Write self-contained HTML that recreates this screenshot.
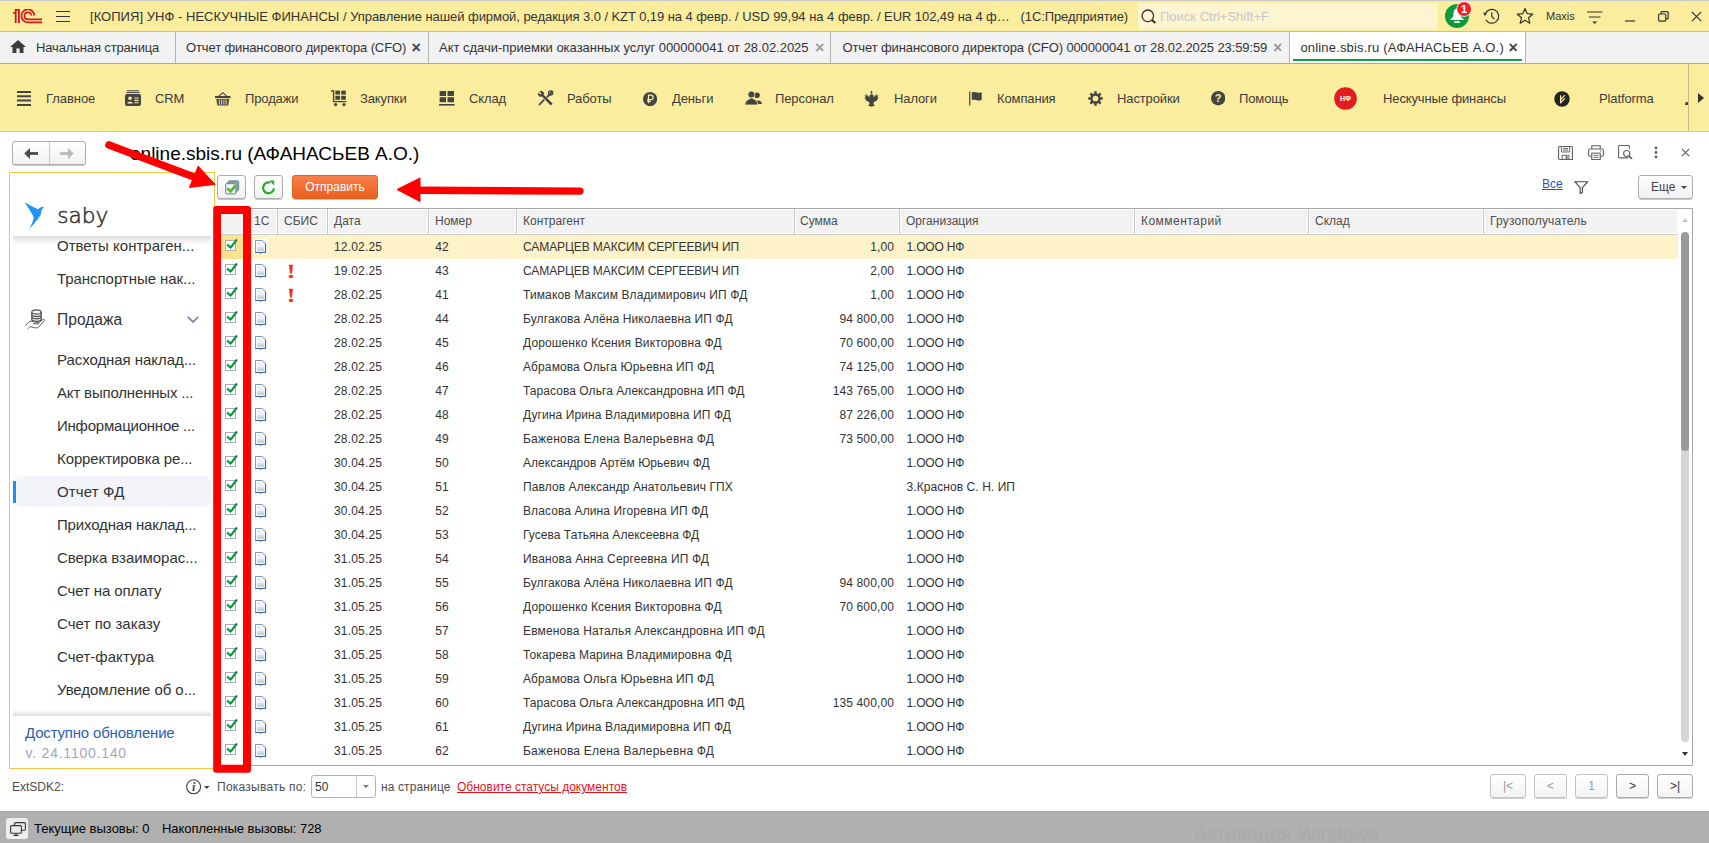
<!DOCTYPE html>
<html lang="ru">
<head>
<meta charset="utf-8">
<title>online.sbis.ru</title>
<style>
*{box-sizing:border-box;margin:0;padding:0}
html,body{width:1709px;height:843px;overflow:hidden;background:#fff}
body{font-family:"Liberation Sans",Arial,sans-serif;font-size:13px;color:#333;position:relative}
.abs{position:absolute}
svg{display:block}
/* title bar */
#tb{position:absolute;left:0;top:0;width:1709px;height:32px;background:#fbed9e;border-top:1px solid #c9c9c9;border-bottom:1px solid #cfc170}
#tb .t{position:absolute;top:8px;left:90px;font-size:13px;line-height:16px;color:#333;white-space:pre}
#srch{position:absolute;left:1138px;top:2px;width:300px;height:26px;background:#fdf5cf;border-radius:4px}
#srch span{position:absolute;left:22px;top:6px;font-size:13px;line-height:16px;color:#c9c5c8}
/* tabs */
#tabs{position:absolute;left:0;top:32px;width:1709px;height:32px;background:#f2f2f2;border-bottom:1px solid #a9a9a9}
.tab{position:absolute;top:0;height:31px;border-right:1px solid #b4b4b4;font-size:13px;line-height:16px;color:#333;white-space:pre}
.tab .l{position:absolute;top:8px}
.tab .x{position:absolute;top:7.8px;font-size:16px;line-height:16px;color:#9a9a9a;font-weight:bold}
/* menu */
#menu{position:absolute;left:0;top:64px;width:1709px;height:68px;background:#fbed9e;border-bottom:1px solid #d8cc8d}
.mi{position:absolute;top:27px;font-size:13px;line-height:16px;color:#3c3c3c;white-space:pre;letter-spacing:-0.12px}
.ic{position:absolute}
/* page header */
#ttl{position:absolute;left:130px;top:143px;font-size:19px;line-height:22px;color:#000;white-space:pre}
/* sidebar */
#sb{position:absolute;left:9px;top:172px;width:206px;height:597px;border:1px solid #f3c840;background:#fff}
.si{position:absolute;left:57px;font-size:15px;line-height:20px;color:#333;white-space:pre;letter-spacing:-0.12px}
/* toolbar */
.btn{position:absolute;height:24px;border:1px solid #adadad;border-radius:3px;background:linear-gradient(#fff,#f1f1f1);box-shadow:0 1px 0 #c8c8c8}
/* table */
#tbl{position:absolute;left:217px;top:208px;width:1476px;height:558px;border:1px solid #a6a6a6;border-bottom-color:#a6a6a6;background:#fff}
#th{position:absolute;left:218px;top:209px;width:1460px;height:26px;background:#f2f2f2;border-bottom:1px solid #cdcdcd;box-shadow:inset 0 1px 0 #fff,inset 0 -1px 0 #fff,inset -1px 0 0 #fff}
.h{position:absolute;top:214px;font-size:12px;line-height:14px;color:#4d4d4d;white-space:pre}
.hd{position:absolute;top:209px;width:3px;height:25px;margin-left:-1px;background:#c4c4c4;border-left:1px solid #fff;border-right:1px solid #fff}
.row{position:absolute;left:218px;width:1460px;height:24px;font-size:12px;line-height:14px;color:#333;white-space:pre}
.row.sel{background:#fef2c8}
.row span{position:absolute;top:5px}
.row .cb{left:7px;top:2.5px}
.row.sel .cb{}
.row .dc{left:36px;top:5px}
.row.sel .dc{background:#fff;left:35px;top:4px;width:15px;height:15px;padding:1px 0 0 1px}
.row .ex{left:69.3px;top:3.7px;font-family:"Liberation Serif",serif;font-weight:bold;font-size:18.5px;line-height:18px;color:#e8301c;transform:scaleX(1.3);transform-origin:left top;-webkit-text-stroke:0.3px #e8301c}
.c-d{left:116px;letter-spacing:0.17px}.c-n{left:217.3px}.c-k{left:305px}.c-s{right:784px;text-align:right;letter-spacing:0.12px}.c-o{left:688.6px;letter-spacing:-0.2px}
/* footer */
.f{position:absolute;font-size:12px;line-height:14px;color:#4d4d4d;white-space:pre}
.pg{position:absolute;top:774px;height:24px;border:1px solid #c3c3c3;border-radius:3px;background:linear-gradient(#fff,#f3f3f3);box-shadow:0 1px 0 #d0d0d0;font-size:12px;line-height:22px;text-align:center;color:#9a9a9a}
#st{position:absolute;left:0;top:811px;width:1709px;height:32px;background:#b0b0b0;border-top:1px solid #a4a4a4}
#st .s{position:absolute;top:9px;font-size:13px;line-height:16px;color:#000;white-space:pre}
</style>
</head>
<body>
<svg width="0" height="0" style="position:absolute">
<defs>
<g id="ck"><rect x="0.5" y="2.5" width="10" height="10" fill="#fff" stroke="#adadb3"/><path d="M2.8 7.2 L5.6 9.6 L11.4 2.2" fill="none" stroke="#0a9a44" stroke-width="2.2" stroke-linecap="round" stroke-linejoin="round"/></g>
<g id="doc"><path d="M1.5 0.5 H8.6 L11.5 3.4 V12.5 H1.5 Z" fill="#fff"/><rect x="3.2" y="5.6" width="6.8" height="5.6" fill="url(#dg)"/><path d="M3.4 2.6H7M3.4 4.2H8" stroke="#d4dae2" stroke-width="0.9"/><path d="M8.6 0.6V3.4H11.4Z" fill="#c6d6e8"/><path d="M1.5 12.5V0.5H8.6L11.5 3.4" fill="none" stroke="#7e9cbd"/><path d="M11.5 3.4V12.5H1.2" fill="none" stroke="#43658a" stroke-width="1.2"/><path d="M5.6 13.2H7.6V14H5.6Z" fill="#b99782"/></g><linearGradient id="dg" x1="0" y1="0" x2="0" y2="1"><stop offset="0" stop-color="#e9eff6"/><stop offset="1" stop-color="#bccde0"/></linearGradient>
</defs>
</svg>

<!-- TITLE BAR -->
<div id="tb">
<svg class="ic" style="left:13px;top:8px" width="30" height="15" viewBox="0 0 30 15"><path d="M0 3.9H2.7M2.7 0.2V13.9M5.9 0.2V13.9M1.9 0.8H6.8" fill="none" stroke="#d8141c" stroke-width="1.8"/><path d="M21.4 6.5 A6.5 6.5 0 1 0 15 13.4 H29" fill="none" stroke="#d8141c" stroke-width="1.7"/><path d="M18.4 6.5 A3.5 3.5 0 1 0 15 10.4 H29" fill="none" stroke="#d8141c" stroke-width="1.6"/></svg>
<svg class="ic" style="left:56px;top:10px" width="15" height="12" viewBox="0 0 15 12"><path d="M0 0.5H14M0 5.5H14M0 10.5H14" stroke="#333" stroke-width="1"/></svg>
<span class="t"><span style="letter-spacing:0.032px">[КОПИЯ] УНФ - НЕСКУЧНЫЕ ФИНАНСЫ </span><span style="letter-spacing:-0.055px">/ Управление нашей фирмой, редакция 3.0 </span><span style="letter-spacing:-0.074px">/ KZT 0,19 на 4 февр. </span><span style="letter-spacing:-0.025px">/ USD 99,94 на 4 февр. </span><span style="letter-spacing:-0.079px">/ EUR 102,49 на 4 ф…</span></span>
<span class="t" style="left:1020.5px"><span style="letter-spacing:-0.087px">(1С:Предприятие)</span></span>
<div id="srch"><svg class="ic" style="left:3px;top:6px" width="17" height="16" viewBox="0 0 17 16"><circle cx="6.8" cy="6.8" r="5.8" fill="none" stroke="#333" stroke-width="1.3"/><path d="M11 11 L14.4 14" stroke="#333" stroke-width="2.2"/></svg><span>Поиск Ctrl+Shift+F</span></div>
<!-- bell -->
<svg class="ic" style="left:1444px;top:0px" width="30" height="28" viewBox="0 0 30 28"><circle cx="13" cy="15" r="12" fill="#109a40"/><path d="M13 7.5 C10 7.5 9.6 11 9.4 14 C9.2 16.6 7 17.6 5.8 19 H20.2 C19 17.6 16.8 16.6 16.6 14 C16.4 11 16 7.5 13 7.5Z" fill="#fff"/><rect x="10" y="20.2" width="6" height="1.8" rx="0.9" fill="#fff"/><circle cx="20.1" cy="8" r="7.7" fill="#fff"/><circle cx="20.1" cy="8" r="7" fill="#f5222a"/><text x="20.1" y="12" font-family="Liberation Sans,Arial,sans-serif" font-weight="bold" font-size="11" fill="#fff" text-anchor="middle">1</text></svg>
<!-- history -->
<svg class="ic" style="left:1482px;top:6px" width="18" height="18" viewBox="0 0 18 18"><path d="M3.14 7.5 A6.9 6.9 0 1 1 3.82 12.75" fill="none" stroke="#333" stroke-width="1.2"/><path d="M1.2 5.5 L5 6.3 L2.7 8.9 Z" fill="#333"/><path d="M9.8 5.2 V9.5 L12.3 12.2" fill="none" stroke="#333" stroke-width="1.2"/></svg>
<!-- star -->
<svg class="ic" style="left:1516px;top:6px" width="18" height="18" viewBox="0 0 18 18"><path d="M9 1.6 L11.2 6.7 L16.7 7.2 L12.5 10.8 L13.8 16.2 L9 13.3 L4.2 16.2 L5.5 10.8 L1.3 7.2 L6.8 6.7 Z" fill="none" stroke="#333" stroke-width="1.2" stroke-linejoin="round"/></svg>
<span class="t" style="left:1546px;top:8px;font-size:11px;line-height:14px">Maxis</span>
<svg class="ic" style="left:1587px;top:10px" width="16" height="14" viewBox="0 0 16 14"><path d="M0 1H15.5M2 6H13.5" stroke="#333" stroke-width="1.2"/><path d="M5.2 10.5H10.2L7.7 13Z" fill="#333"/></svg>
<svg class="ic" style="left:1625px;top:19px" width="10" height="2" viewBox="0 0 10 2"><path d="M0 1H10" stroke="#333" stroke-width="1.2"/></svg>
<svg class="ic" style="left:1658px;top:10px" width="11" height="11" viewBox="0 0 11 11"><rect x="0.6" y="3" width="7.2" height="7.2" rx="1" fill="none" stroke="#333" stroke-width="1.2"/><path d="M3 3V1.6 A1 1 0 0 1 4 0.6 H9.2 A1 1 0 0 1 10.2 1.6 V6.8 A1 1 0 0 1 9.2 7.8 H7.8" fill="none" stroke="#333" stroke-width="1.2"/></svg>
<svg class="ic" style="left:1691px;top:10px" width="11" height="11" viewBox="0 0 11 11"><path d="M0.8 0.8L10.2 10.2M10.2 0.8L0.8 10.2" stroke="#333" stroke-width="1.2"/></svg>
</div>

<!-- TABS -->
<div id="tabs">
<div class="tab" style="left:0;width:176px"><svg class="ic" style="left:10px;top:8px" width="16" height="13" viewBox="0 0 16 13"><path d="M8 0 L16 7 H13.5 V13 H9.6 V8.6 H6.4 V13 H2.5 V7 H0 Z" fill="#3c3c3c"/></svg><span class="l" style="left:36px"><span style="letter-spacing:-0.147px">Начальная страница</span></span></div>
<div class="tab" style="left:176px;width:253px"><span class="l" style="left:10px"><span style="letter-spacing:-0.125px">Отчет финансового директора (CFO)</span></span><span class="x" style="left:235.6px;color:#444">×</span></div>
<div class="tab" style="left:429px;width:402px"><span class="l" style="left:10px"><span style="letter-spacing:-0.018px">Акт сдачи-приемки оказанных услуг 000000041 от 28.02.2025</span></span><span class="x" style="left:386px">×</span></div>
<div class="tab" style="left:831px;width:459px"><span class="l" style="left:11.5px"><span style="letter-spacing:-0.117px">Отчет финансового директора (CFO) 000000041 от 28.02.2025 23:59:59</span></span><span class="x" style="left:442px">×</span></div>
<div class="tab" style="left:1290px;width:236px;background:#fff;height:31px"><span class="l" style="left:10.4px"><span style="letter-spacing:0.177px">online.sbis.ru (АФАНАСЬЕВ А.О.)</span></span><span class="x" style="left:218.6px;color:#444">×</span><div class="abs" style="left:3px;top:27px;width:229px;height:2px;background:#10a046"></div></div>
</div>

<!-- MENU -->
<div id="menu">
<svg class="ic" style="left:17px;top:27px" width="14" height="15" viewBox="0 0 14 15"><path d="M0 1H14M0 5.3H14M0 9.6H14M0 13.9H14" stroke="#444" stroke-width="2"/></svg>
<span class="mi" style="left:46px"><span style="letter-spacing:-0.067px">Главное</span></span>
<svg class="ic" style="left:125px;top:26px" width="16" height="16" viewBox="0 0 16 16"><path d="M2 0.8H14M1.2 2.6H14.8" stroke="#444" stroke-width="1"/><rect x="0" y="4" width="16" height="12" rx="2" fill="#444"/><circle cx="5" cy="8.2" r="1.8" fill="#fbed9e"/><path d="M2.2 13.6 C2.2 11 7.8 11 7.8 13.6Z" fill="#fbed9e"/><path d="M9.4 8H13.6M9.4 10.4H13.6M9.4 12.8H13.6" stroke="#fbed9e" stroke-width="1.1"/></svg>
<span class="mi" style="left:155px">CRM</span>
<svg class="ic" style="left:215px;top:28px" width="15.5" height="13.6" viewBox="0 0 16 15" preserveAspectRatio="none"><path d="M4 4.5 L8 0.8 L12 4.5" fill="none" stroke="#444" stroke-width="1.2"/><rect x="0" y="4.4" width="16" height="2.4" fill="#444"/><path d="M1.4 7.6 H14.6 L13.6 15 H2.4 Z" fill="#444"/><path d="M4.5 8.2V14M6.8 8.2V14M9.2 8.2V14M11.5 8.2V14" stroke="#fbed9e" stroke-width="1"/></svg>
<span class="mi" style="left:245px">Продажи</span>
<svg class="ic" style="left:331px;top:26px" width="16" height="17" viewBox="0 0 16 17"><path d="M0 1H2.6V11.6H15.4" fill="none" stroke="#444" stroke-width="1.4"/><rect x="4.4" y="0.6" width="4.6" height="4" fill="#444"/><rect x="10.2" y="0.6" width="4.6" height="4" fill="#444"/><rect x="4.4" y="5.8" width="4.6" height="4" fill="#444"/><rect x="10.2" y="5.8" width="4.6" height="4" fill="#444"/><circle cx="4.6" cy="14.6" r="1.6" fill="#444"/><circle cx="13" cy="14.6" r="1.6" fill="#444"/></svg>
<span class="mi" style="left:360px">Закупки</span>
<svg class="ic" style="left:439.4px;top:27px" width="15.6" height="15" viewBox="0 0 15 15" preserveAspectRatio="none"><rect x="0.6" y="0" width="6.2" height="5" fill="#444"/><rect x="8.2" y="0" width="6.2" height="5" fill="#444"/><rect x="0.6" y="6.2" width="6.2" height="5" fill="#444"/><rect x="8.2" y="6.2" width="6.2" height="5" fill="#444"/><rect x="0" y="13" width="15" height="1.6" fill="#444"/></svg>
<span class="mi" style="left:469px">Склад</span>
<svg class="ic" style="left:537px;top:26px" width="17" height="16" viewBox="0 0 17 16"><path d="M2.2 1.2 L5 0.8 L7.2 3 L6.6 4.8 L15.6 13.6 L13.8 15.4 L5 6.4 L3 7 L0.8 4.8 L1.4 2.4 L3.4 4.4 L4.6 3.4 Z" fill="#444"/><path d="M15.8 1 L9.8 7.4 M7.2 9.6 L2 15" stroke="#444" stroke-width="1.8"/><circle cx="13.6" cy="3" r="2" fill="none" stroke="#444" stroke-width="1.4"/></svg>
<span class="mi" style="left:567px">Работы</span>
<svg class="ic" style="left:643px;top:27.5px" width="14.2" height="14.2" viewBox="0 0 15 15"><circle cx="7.5" cy="7.5" r="7.5" fill="#444"/><path d="M5.8 12V3.4H8.4A2.3 2.3 0 0 1 8.4 8H4.4M4.4 10H8.4" fill="none" stroke="#fbed9e" stroke-width="1.3"/></svg>
<span class="mi" style="left:672px">Деньги</span>
<svg class="ic" style="left:745px;top:27px" width="17" height="14" viewBox="0 0 17 14"><circle cx="12" cy="4.2" r="2.8" fill="#444"/><path d="M9 13 C9 8.6 16.6 8.2 16.8 12.4 V13Z" fill="#444"/><circle cx="6.4" cy="3.6" r="3.5" fill="#444" stroke="#fbed9e" stroke-width="0.8"/><path d="M0 14 C0 8 5 9 5 7 H8 C8 9 12.8 8 12.8 14Z" fill="#444" stroke="#fbed9e" stroke-width="0.8"/></svg>
<span class="mi" style="left:775px">Персонал</span>
<svg class="ic" style="left:864px;top:26px" width="15" height="17" viewBox="0 0 15 17"><path d="M7.5 0.5 L8.6 2.4 L7.5 4 L6.4 2.4Z M7.5 4.2 C9.4 4.2 10 5.8 9.6 7.4 L13 3.4 L12.4 6.2 L14.6 4.6 L13.2 8 L14.8 7.4 L12.4 11 L10 11.8 L9.4 14 L11 15.6 L7.5 16.8 L4 15.6 L5.6 14 L5 11.8 L2.6 11 L0.2 7.4 L1.8 8 L0.4 4.6 L2.6 6.2 L2 3.4 L5.4 7.4 C5 5.8 5.6 4.2 7.5 4.2Z" fill="#444"/></svg>
<span class="mi" style="left:894px">Налоги</span>
<svg class="ic" style="left:969px;top:27px" width="14" height="15" viewBox="0 0 15 15"><path d="M0.8 0V15" stroke="#444" stroke-width="1.3"/><path d="M3 1 C6 -0.4 8 2.6 13.6 0.8 V9 C8 10.8 6 7.8 3 9.2Z" fill="#444"/></svg>
<span class="mi" style="left:997px">Компания</span>
<svg class="ic" style="left:1088px;top:27px" width="15" height="15" viewBox="0 0 15 15"><circle cx="7.5" cy="7.5" r="4" fill="none" stroke="#444" stroke-width="2.3"/><path d="M7.5 0.3V3M7.5 12V14.7M0.3 7.5H3M12 7.5H14.7M2.4 2.4L4.3 4.3M10.7 10.7L12.6 12.6M12.6 2.4L10.7 4.3M4.3 10.7L2.4 12.6" stroke="#444" stroke-width="2.5"/></svg>
<span class="mi" style="left:1117px">Настройки</span>
<svg class="ic" style="left:1211px;top:27.3px" width="14.4" height="14.4" viewBox="0 0 15 15"><circle cx="7.5" cy="7.5" r="7.5" fill="#444"/><text x="7.5" y="11.6" font-family="Liberation Sans,Arial,sans-serif" font-weight="bold" font-size="11.5" fill="#fbed9e" text-anchor="middle">?</text></svg>
<span class="mi" style="left:1239px">Помощь</span>
<svg class="ic" style="left:1334px;top:23px" width="23" height="23" viewBox="0 0 23 23"><circle cx="11.5" cy="11.5" r="11.3" fill="#e31b23"/><text x="11.5" y="14" font-family="Liberation Sans,Arial,sans-serif" font-weight="bold" font-size="7" fill="#fff" text-anchor="middle">НФ</text></svg>
<span class="mi" style="left:1383px">Нескучные финансы</span>
<svg class="ic" style="left:1553.6px;top:26.5px" width="16" height="16" viewBox="0 0 17 17"><circle cx="8.5" cy="8.5" r="8.2" fill="#222"/><path d="M7 13.4V4.6M7.2 9 L11.6 4.4M7.2 12.2 L11.6 7.8" fill="none" stroke="#fbed9e" stroke-width="1.3"/></svg>
<span class="mi" style="left:1599px">Platforma</span>
<div class="abs" style="left:1685px;top:38px;width:3px;height:3px;background:#444;border-radius:2px 0 0 0"></div>
<div class="abs" style="left:1688px;top:0;width:1px;height:67px;background:#c4ba82"></div>
<svg class="ic" style="left:1698px;top:29px" width="6" height="10" viewBox="0 0 6 10"><path d="M0 0L6 5L0 10Z" fill="#333"/></svg>
</div>

<!-- NAV BUTTONS -->
<div class="btn" style="left:12px;top:141px;width:74px;height:24px"><div class="abs" style="left:36px;top:0;width:1px;height:22px;background:#c9c9c9"></div>
<svg class="ic" style="left:11px;top:6px" width="15" height="11" viewBox="0 0 15 11"><path d="M14 5.5H4" stroke="#4a4a4a" stroke-width="2.8"/><path d="M6 0L0.2 5.5L6 11Z" fill="#4a4a4a"/></svg>
<svg class="ic" style="left:47px;top:6px" width="15" height="11" viewBox="0 0 15 11"><path d="M0 5.5H10" stroke="#b8b8b8" stroke-width="2.8"/><path d="M8 0L13.8 5.5L8 11Z" fill="#b8b8b8"/></svg>
</div>
<div id="ttl">online.sbis.ru (АФАНАСЬЕВ А.О.)</div>

<!-- right header icons -->
<svg class="ic" style="left:1558px;top:146px" width="15" height="14" viewBox="0 0 16 15"><path d="M0.6 1.6 A1 1 0 0 1 1.6 0.6 H14.4 A1 1 0 0 1 15.4 1.6 V14.4 H1.6 A1 1 0 0 1 0.6 13.4 Z" fill="none" stroke="#636363" stroke-width="1.2"/><path d="M3.6 0.6V6.4H12.4V0.6M5.2 2.6H10.8M5.2 4.4H10.8" fill="none" stroke="#636363" stroke-width="1"/><rect x="4.4" y="10" width="7.2" height="4.4" fill="none" stroke="#636363" stroke-width="1"/><rect x="8.2" y="11" width="2" height="3" fill="#636363"/></svg>
<svg class="ic" style="left:1588px;top:145px" width="16" height="15.4" viewBox="0 0 17 17" preserveAspectRatio="none"><path d="M4 4.4V0.8H13V4.4" fill="none" stroke="#636363" stroke-width="1.2"/><rect x="0.6" y="4.4" width="15.8" height="8" rx="1.6" fill="none" stroke="#636363" stroke-width="1.2"/><rect x="4" y="9" width="9" height="7" fill="#fff" stroke="#636363" stroke-width="1.2"/><path d="M5.8 11.4H11.2M5.8 13.6H11.2" stroke="#636363" stroke-width="1"/><path d="M12.6 6.8H14" stroke="#636363" stroke-width="1.2"/></svg>
<svg class="ic" style="left:1618px;top:145px" width="15.4" height="15" viewBox="0 0 17 17" preserveAspectRatio="none"><path d="M11.6 14.6H1.6A1 1 0 0 1 0.6 13.6V1.6A1 1 0 0 1 1.6 0.6H11.6A1 1 0 0 1 12.6 1.6V4.6" fill="none" stroke="#636363" stroke-width="1.2"/><circle cx="9.6" cy="9.6" r="3.4" fill="none" stroke="#636363" stroke-width="1.3"/><path d="M12 12.2L15.4 15.8" stroke="#636363" stroke-width="2"/></svg>
<svg class="ic" style="left:1653.6px;top:146px" width="4" height="13" viewBox="0 0 4 13"><circle cx="2" cy="2" r="1.4" fill="#636363"/><circle cx="2" cy="6.5" r="1.4" fill="#636363"/><circle cx="2" cy="11" r="1.4" fill="#636363"/></svg>
<svg class="ic" style="left:1681px;top:148px" width="9" height="9" viewBox="0 0 9 9"><path d="M0.8 0.8L8.2 8.2M8.2 0.8L0.8 8.2" stroke="#636363" stroke-width="1.2"/></svg>

<!-- SIDEBAR -->
<div id="sb"></div>
<svg class="ic" style="left:24px;top:202px" width="21" height="28" viewBox="0 0 21 28"><path d="M0.7 0.4 L14.3 7.4 C15 5.8 16.6 5.2 20.2 4.2 C18.6 6 17.6 8 17.2 9.8 L17.1 12 C14 17.4 9.6 22.6 5.3 26.9 C7.4 23.2 9 19.4 9.9 15.6 C7.4 10.4 4.2 5.2 0.7 0.4Z" fill="#2094ff"/></svg>
<div class="abs" style="left:57.2px;top:203px;font-family:'DejaVu Sans Light','DejaVu Sans','Liberation Sans',sans-serif;font-weight:200;font-size:21.7px;line-height:26px;color:#333;-webkit-text-stroke:0.55px #383838">saby</div>
<div class="abs" style="left:13px;top:236px;width:198px;height:9px;background:linear-gradient(#dadada,#efefef 45%,#fff)"></div>
<div class="abs" style="left:14px;top:476px;width:197px;height:31px;background:#f3f4f9;border-radius:8px"></div>
<div class="abs" style="left:13px;top:481px;width:3px;height:22px;background:#1b8dff"></div>
<div class="si" style="top:236px;letter-spacing:0.011px">Ответы контраген...</div>
<div class="si" style="top:269px;letter-spacing:-0.05px">Транспортные нак...</div>
<div class="si" style="top:350px;letter-spacing:-0.056px">Расходная наклад...</div>
<div class="si" style="top:383px;letter-spacing:-0.172px">Акт выполненных ...</div>
<div class="si" style="top:416px;letter-spacing:-0.229px">Информационное ...</div>
<div class="si" style="top:449px;letter-spacing:-0.1px">Корректировка ре...</div>
<div class="si" style="top:482px;letter-spacing:0.143px">Отчет ФД</div>
<div class="si" style="top:515px;letter-spacing:-0.161px">Приходная наклад...</div>
<div class="si" style="top:548px;letter-spacing:-0.05px">Сверка взаиморас...</div>
<div class="si" style="top:581px;letter-spacing:-0.108px">Счет на оплату</div>
<div class="si" style="top:614px;letter-spacing:0.054px">Счет по заказу</div>
<div class="si" style="top:647px;letter-spacing:0.036px">Счет-фактура</div>
<div class="si" style="top:680px;letter-spacing:-0.061px">Уведомление об о...</div>
<svg class="ic" style="left:25px;top:308px" width="22" height="22" viewBox="0 0 22 22"><g fill="none" stroke="#505050" stroke-width="1.1"><ellipse cx="11.5" cy="4" rx="4.7" ry="2.1" fill="#f4f4f4"/><path d="M6.8 4V6.4C6.8 9.2 16.2 9.2 16.2 6.4V4M6.8 6.4V8.8C6.8 11.6 16.2 11.6 16.2 8.8V6.4M6.8 8.8V11.2C6.8 14 16.2 14 16.2 11.2V8.8" stroke-width="1.3"/><path d="M0.2 17.6L4.4 13.4C6.5 13 8 13.2 9.4 14L13 14.6C14 14.8 14 16 13 16L8 15.6M13.6 15L17.6 11.6C18.8 10.8 20 11.8 19.2 12.8L13.4 19.4C12.6 20 11 20 9.4 19.6L5.2 18.6L3 20.8" stroke-width="0.95"/></g></svg>
<div class="abs" style="left:57px;top:309px;font-size:15.6px;line-height:22px;color:#333;white-space:pre">Продажа</div>
<svg class="ic" style="left:187px;top:316px" width="12" height="7" viewBox="0 0 12 7"><path d="M0.8 0.8L6 6L11.2 0.8" fill="none" stroke="#8388aa" stroke-width="1.8"/></svg>
<div class="abs" style="left:13px;top:709px;width:198px;height:7px;background:linear-gradient(#fff,#f2f2f2 50%,#dedede)"></div>
<div class="abs" style="left:25px;top:723px;font-size:15px;line-height:20px;color:#2c5fb3;white-space:pre"><span style="letter-spacing:-0.178px">Доступно обновление</span></div>
<div class="abs" style="left:25.6px;top:743px;font-size:14px;line-height:20px;color:#a3a6bd;white-space:pre"><span style="letter-spacing:0.762px">v. 24.1100.140</span></div>

<!-- TOOLBAR -->
<div class="btn" style="left:217px;top:175px;width:29px"><svg class="ic" style="left:6px;top:4px" width="16" height="15" viewBox="0 0 16 15"><rect x="4.3" y="0.8" width="10.4" height="9.6" rx="1" fill="#8aa0b6" stroke="#6f8aa4" stroke-width="0.9"/><rect x="3" y="2.2" width="10.4" height="9.8" rx="1" fill="#a9c9a0" stroke="#6f8aa4" stroke-width="0.9"/><rect x="1.7" y="3.7" width="10.2" height="10.2" rx="1" fill="#f4f8f4" stroke="#5d7fa0" stroke-width="1"/><path d="M3.3 8.3L6.6 11.4L11.6 5.4" fill="none" stroke="#5cb531" stroke-width="2.8" stroke-linejoin="round"/></svg></div>
<div class="btn" style="left:254px;top:175px;width:29px"><svg class="ic" style="left:6px;top:4px" width="15" height="15" viewBox="0 0 15 15"><path d="M12.9 8.4 A5.4 5.4 0 1 1 9.2 2.7" fill="none" stroke="#2fa732" stroke-width="2.3"/><path d="M8.3 0.6L13.3 0.4L13.1 5.6Z" fill="#2fa732"/></svg></div>
<div class="abs" style="left:292px;top:175px;width:86px;height:24px;border-radius:3px;background:linear-gradient(#f8804a,#ea5f1f);border:1px solid #e2621f;box-shadow:0 1px 0 #c9c9c9;color:#fff;font-size:12px;line-height:22px;text-align:center">Отправить</div>
<div class="abs" style="left:1542px;top:177px;font-size:12px;line-height:14px;color:#1f57c3;text-decoration:underline">Все</div>
<svg class="ic" style="left:1574px;top:180.5px" width="14.6" height="13.6" viewBox="0 0 16 15"><path d="M0.8 0.8H15.2L9.2 7.4V12.4L6.8 14.2V7.4Z" fill="none" stroke="#444" stroke-width="1.2" stroke-linejoin="round"/></svg>
<div class="btn" style="left:1638px;top:175px;width:55px;font-size:12px;line-height:22px;color:#444;padding-left:12px">Еще<svg class="ic" style="left:42px;top:10px" width="6" height="3" viewBox="0 0 6 3"><path d="M0 0H6L3 3Z" fill="#444"/></svg></div>

<!-- TABLE -->
<div id="tbl"></div>
<div id="th"></div>
<div class="hd" style="left:250px"></div><div class="hd" style="left:277px"></div><div class="hd" style="left:327px"></div><div class="hd" style="left:428px"></div><div class="hd" style="left:516px"></div><div class="hd" style="left:794px"></div><div class="hd" style="left:899px"></div><div class="hd" style="left:1134px"></div><div class="hd" style="left:1308px"></div><div class="hd" style="left:1483px"></div>
<span class="h" style="left:254px">1С</span><span class="h" style="left:284px">СБИС</span><span class="h" style="left:334px">Дата</span><span class="h" style="left:435px">Номер</span><span class="h" style="left:523px">Контрагент</span><span class="h" style="left:800px">Сумма</span><span class="h" style="left:906px">Организация</span><span class="h" style="left:1141px"><span style="letter-spacing:0.47px">Комментарий</span></span><span class="h" style="left:1315px">Склад</span><span class="h" style="left:1490px"><span style="letter-spacing:0.2px">Грузополучатель</span></span>
<div class="row sel" style="top:235px"><span class="cb"><svg width="14" height="14" viewBox="0 0 14 14"><use href="#ck"/></svg></span><span class="dc"><svg width="13" height="15" viewBox="0 0 13 15"><use href="#doc"/></svg></span><span class="c-d">12.02.25</span><span class="c-n">42</span><span class="c-k" style="letter-spacing:-0.089px">САМАРЦЕВ МАКСИМ СЕРГЕЕВИЧ ИП</span><span class="c-s">1,00</span><span class="c-o">1.ООО НФ</span></div>
<div class="row" style="top:259px"><span class="cb"><svg width="14" height="14" viewBox="0 0 14 14"><use href="#ck"/></svg></span><span class="dc"><svg width="13" height="15" viewBox="0 0 13 15"><use href="#doc"/></svg></span><span class="ex">!</span><span class="c-d">19.02.25</span><span class="c-n">43</span><span class="c-k" style="letter-spacing:-0.089px">САМАРЦЕВ МАКСИМ СЕРГЕЕВИЧ ИП</span><span class="c-s">2,00</span><span class="c-o">1.ООО НФ</span></div>
<div class="row" style="top:283px"><span class="cb"><svg width="14" height="14" viewBox="0 0 14 14"><use href="#ck"/></svg></span><span class="dc"><svg width="13" height="15" viewBox="0 0 13 15"><use href="#doc"/></svg></span><span class="ex">!</span><span class="c-d">28.02.25</span><span class="c-n">41</span><span class="c-k" style="letter-spacing:0.119px">Тимаков Максим Владимирович ИП ФД</span><span class="c-s">1,00</span><span class="c-o">1.ООО НФ</span></div>
<div class="row" style="top:307px"><span class="cb"><svg width="14" height="14" viewBox="0 0 14 14"><use href="#ck"/></svg></span><span class="dc"><svg width="13" height="15" viewBox="0 0 13 15"><use href="#doc"/></svg></span><span class="c-d">28.02.25</span><span class="c-n">44</span><span class="c-k" style="letter-spacing:0.123px">Булгакова Алёна Николаевна ИП ФД</span><span class="c-s">94 800,00</span><span class="c-o">1.ООО НФ</span></div>
<div class="row" style="top:331px"><span class="cb"><svg width="14" height="14" viewBox="0 0 14 14"><use href="#ck"/></svg></span><span class="dc"><svg width="13" height="15" viewBox="0 0 13 15"><use href="#doc"/></svg></span><span class="c-d">28.02.25</span><span class="c-n">45</span><span class="c-k" style="letter-spacing:0.131px">Дорошенко Ксения Викторовна ФД</span><span class="c-s">70 600,00</span><span class="c-o">1.ООО НФ</span></div>
<div class="row" style="top:355px"><span class="cb"><svg width="14" height="14" viewBox="0 0 14 14"><use href="#ck"/></svg></span><span class="dc"><svg width="13" height="15" viewBox="0 0 13 15"><use href="#doc"/></svg></span><span class="c-d">28.02.25</span><span class="c-n">46</span><span class="c-k" style="letter-spacing:0.104px">Абрамова Ольга Юрьевна ИП ФД</span><span class="c-s">74 125,00</span><span class="c-o">1.ООО НФ</span></div>
<div class="row" style="top:379px"><span class="cb"><svg width="14" height="14" viewBox="0 0 14 14"><use href="#ck"/></svg></span><span class="dc"><svg width="13" height="15" viewBox="0 0 13 15"><use href="#doc"/></svg></span><span class="c-d">28.02.25</span><span class="c-n">47</span><span class="c-k" style="letter-spacing:0.055px">Тарасова Ольга Александровна ИП ФД</span><span class="c-s">143 765,00</span><span class="c-o">1.ООО НФ</span></div>
<div class="row" style="top:403px"><span class="cb"><svg width="14" height="14" viewBox="0 0 14 14"><use href="#ck"/></svg></span><span class="dc"><svg width="13" height="15" viewBox="0 0 13 15"><use href="#doc"/></svg></span><span class="c-d">28.02.25</span><span class="c-n">48</span><span class="c-k" style="letter-spacing:0.1px">Дугина Ирина Владимировна ИП ФД</span><span class="c-s">87 226,00</span><span class="c-o">1.ООО НФ</span></div>
<div class="row" style="top:427px"><span class="cb"><svg width="14" height="14" viewBox="0 0 14 14"><use href="#ck"/></svg></span><span class="dc"><svg width="13" height="15" viewBox="0 0 13 15"><use href="#doc"/></svg></span><span class="c-d">28.02.25</span><span class="c-n">49</span><span class="c-k" style="letter-spacing:0.222px">Баженова Елена Валерьевна ФД</span><span class="c-s">73 500,00</span><span class="c-o">1.ООО НФ</span></div>
<div class="row" style="top:451px"><span class="cb"><svg width="14" height="14" viewBox="0 0 14 14"><use href="#ck"/></svg></span><span class="dc"><svg width="13" height="15" viewBox="0 0 13 15"><use href="#doc"/></svg></span><span class="c-d">30.04.25</span><span class="c-n">50</span><span class="c-k" style="letter-spacing:0.03px">Александров Артём Юрьевич ФД</span><span class="c-s"></span><span class="c-o">1.ООО НФ</span></div>
<div class="row" style="top:475px"><span class="cb"><svg width="14" height="14" viewBox="0 0 14 14"><use href="#ck"/></svg></span><span class="dc"><svg width="13" height="15" viewBox="0 0 13 15"><use href="#doc"/></svg></span><span class="c-d">30.04.25</span><span class="c-n">51</span><span class="c-k" style="letter-spacing:0.097px">Павлов Александр Анатольевич ГПХ</span><span class="c-s"></span><span class="c-o" style="letter-spacing:0.065px">3.Краснов С. Н. ИП</span></div>
<div class="row" style="top:499px"><span class="cb"><svg width="14" height="14" viewBox="0 0 14 14"><use href="#ck"/></svg></span><span class="dc"><svg width="13" height="15" viewBox="0 0 13 15"><use href="#doc"/></svg></span><span class="c-d">30.04.25</span><span class="c-n">52</span><span class="c-k" style="letter-spacing:0.104px">Власова Алина Игоревна ИП ФД</span><span class="c-s"></span><span class="c-o">1.ООО НФ</span></div>
<div class="row" style="top:523px"><span class="cb"><svg width="14" height="14" viewBox="0 0 14 14"><use href="#ck"/></svg></span><span class="dc"><svg width="13" height="15" viewBox="0 0 13 15"><use href="#doc"/></svg></span><span class="c-d">30.04.25</span><span class="c-n">53</span><span class="c-k" style="letter-spacing:0.052px">Гусева Татьяна Алексеевна ФД</span><span class="c-s"></span><span class="c-o">1.ООО НФ</span></div>
<div class="row" style="top:547px"><span class="cb"><svg width="14" height="14" viewBox="0 0 14 14"><use href="#ck"/></svg></span><span class="dc"><svg width="13" height="15" viewBox="0 0 13 15"><use href="#doc"/></svg></span><span class="c-d">31.05.25</span><span class="c-n">54</span><span class="c-k" style="letter-spacing:0.133px">Иванова Анна Сергеевна ИП ФД</span><span class="c-s"></span><span class="c-o">1.ООО НФ</span></div>
<div class="row" style="top:571px"><span class="cb"><svg width="14" height="14" viewBox="0 0 14 14"><use href="#ck"/></svg></span><span class="dc"><svg width="13" height="15" viewBox="0 0 13 15"><use href="#doc"/></svg></span><span class="c-d">31.05.25</span><span class="c-n">55</span><span class="c-k" style="letter-spacing:0.123px">Булгакова Алёна Николаевна ИП ФД</span><span class="c-s">94 800,00</span><span class="c-o">1.ООО НФ</span></div>
<div class="row" style="top:595px"><span class="cb"><svg width="14" height="14" viewBox="0 0 14 14"><use href="#ck"/></svg></span><span class="dc"><svg width="13" height="15" viewBox="0 0 13 15"><use href="#doc"/></svg></span><span class="c-d">31.05.25</span><span class="c-n">56</span><span class="c-k" style="letter-spacing:0.131px">Дорошенко Ксения Викторовна ФД</span><span class="c-s">70 600,00</span><span class="c-o">1.ООО НФ</span></div>
<div class="row" style="top:619px"><span class="cb"><svg width="14" height="14" viewBox="0 0 14 14"><use href="#ck"/></svg></span><span class="dc"><svg width="13" height="15" viewBox="0 0 13 15"><use href="#doc"/></svg></span><span class="c-d">31.05.25</span><span class="c-n">57</span><span class="c-k" style="letter-spacing:0.157px">Евменова Наталья Александровна ИП ФД</span><span class="c-s"></span><span class="c-o">1.ООО НФ</span></div>
<div class="row" style="top:643px"><span class="cb"><svg width="14" height="14" viewBox="0 0 14 14"><use href="#ck"/></svg></span><span class="dc"><svg width="13" height="15" viewBox="0 0 13 15"><use href="#doc"/></svg></span><span class="c-d">31.05.25</span><span class="c-n">58</span><span class="c-k" style="letter-spacing:0.117px">Токарева Марина Владимировна ФД</span><span class="c-s"></span><span class="c-o">1.ООО НФ</span></div>
<div class="row" style="top:667px"><span class="cb"><svg width="14" height="14" viewBox="0 0 14 14"><use href="#ck"/></svg></span><span class="dc"><svg width="13" height="15" viewBox="0 0 13 15"><use href="#doc"/></svg></span><span class="c-d">31.05.25</span><span class="c-n">59</span><span class="c-k" style="letter-spacing:0.104px">Абрамова Ольга Юрьевна ИП ФД</span><span class="c-s"></span><span class="c-o">1.ООО НФ</span></div>
<div class="row" style="top:691px"><span class="cb"><svg width="14" height="14" viewBox="0 0 14 14"><use href="#ck"/></svg></span><span class="dc"><svg width="13" height="15" viewBox="0 0 13 15"><use href="#doc"/></svg></span><span class="c-d">31.05.25</span><span class="c-n">60</span><span class="c-k" style="letter-spacing:0.055px">Тарасова Ольга Александровна ИП ФД</span><span class="c-s">135 400,00</span><span class="c-o">1.ООО НФ</span></div>
<div class="row" style="top:715px"><span class="cb"><svg width="14" height="14" viewBox="0 0 14 14"><use href="#ck"/></svg></span><span class="dc"><svg width="13" height="15" viewBox="0 0 13 15"><use href="#doc"/></svg></span><span class="c-d">31.05.25</span><span class="c-n">61</span><span class="c-k" style="letter-spacing:0.1px">Дугина Ирина Владимировна ИП ФД</span><span class="c-s"></span><span class="c-o">1.ООО НФ</span></div>
<div class="row" style="top:739px"><span class="cb"><svg width="14" height="14" viewBox="0 0 14 14"><use href="#ck"/></svg></span><span class="dc"><svg width="13" height="15" viewBox="0 0 13 15"><use href="#doc"/></svg></span><span class="c-d">31.05.25</span><span class="c-n">62</span><span class="c-k" style="letter-spacing:0.222px">Баженова Елена Валерьевна ФД</span><span class="c-s"></span><span class="c-o">1.ООО НФ</span></div>
<div class="abs" style="left:218px;top:235px;width:33px;height:24px;background:#fbe28e"></div><svg class="ic" style="left:225px;top:237.5px" width="14" height="14" viewBox="0 0 14 14"><use href="#ck"/></svg>
<!-- scrollbar -->
<svg class="ic" style="left:1682px;top:218px" width="6" height="4" viewBox="0 0 6 4"><path d="M0 4H6L3 0Z" fill="#c6c6c6"/></svg>
<div class="abs" style="left:1681px;top:234px;width:8px;height:508px;background:#d6d6d6;border-radius:4px"></div>
<div class="abs" style="left:1681px;top:232px;width:8px;height:219px;background:#9a9a9a;border-radius:4px"></div>
<svg class="ic" style="left:1682px;top:752px" width="6" height="4" viewBox="0 0 6 4"><path d="M0 0H6L3 4Z" fill="#333"/></svg>

<!-- FOOTER -->
<span class="f" style="left:12px;top:780px">ExtSDK2:</span>
<svg class="ic" style="left:186px;top:779px" width="25" height="16" viewBox="0 0 25 16"><circle cx="7.6" cy="7.8" r="7" fill="none" stroke="#444" stroke-width="1.1"/><text x="7.6" y="12" font-family="Liberation Serif,serif" font-style="italic" font-weight="bold" font-size="12" fill="#444" text-anchor="middle">i</text><path d="M18 7H23.6L20.8 10Z" fill="#444"/></svg>
<span class="f" style="left:217px;top:780px;letter-spacing:0.25px">Показывать по:</span>
<div class="abs" style="left:311px;top:775px;width:65px;height:23px;border:1px solid #b4b4b4;border-radius:3px;background:#fff"><span class="f" style="left:3px;top:4px;color:#333">50</span><div class="abs" style="left:44px;top:0;width:1px;height:21px;background:#c6c6c6"></div><svg class="ic" style="left:51px;top:9px" width="6" height="3" viewBox="0 0 6 3"><path d="M0 0H6L3 3Z" fill="#777"/></svg></div>
<span class="f" style="left:381px;top:780px;letter-spacing:0.12px">на странице</span>
<span class="f" style="left:457px;top:780px;color:#e8121a;text-decoration:underline">Обновите статусы документов</span>
<div class="pg" style="left:1490px;width:36px">|&lt;</div>
<div class="pg" style="left:1534px;width:33px">&lt;</div>
<div class="pg" style="left:1575px;width:33px">1</div>
<div class="pg" style="left:1616px;width:33px;color:#333;border-color:#a9a9a9">&gt;</div>
<div class="pg" style="left:1657px;width:36px;color:#333;border-color:#a9a9a9">&gt;|</div>

<!-- STATUS BAR -->
<div id="st">
<div class="abs" style="left:6px;top:6px;width:22px;height:21px;background:#eee;border-radius:3px"><svg class="ic" style="left:4px;top:4px" width="16" height="14" viewBox="0 0 16 14"><rect x="4.6" y="0.6" width="10.8" height="7.6" rx="1" fill="none" stroke="#333" stroke-width="1.1"/><rect x="0.6" y="3.6" width="10.8" height="7.6" rx="1" fill="#ececec" stroke="#333" stroke-width="1.1"/><path d="M6 11.2V13M3.4 13.4H8.6" stroke="#333" stroke-width="1.1"/></svg></div>
<span class="s" style="left:34px">Текущие вызовы: 0</span>
<span class="s" style="left:162px"><span style="letter-spacing:-0.045px">Накопленные вызовы: 728</span></span>
<span class="abs" style="left:1194px;top:10px;font-size:20px;line-height:24px;color:#aaa;white-space:pre">Активация Windows</span>
</div>

<!-- ANNOTATIONS -->
<svg class="ic" style="left:0;top:0" width="1709" height="843" viewBox="0 0 1709 843">
<path fill-rule="evenodd" fill="#fe0000" d="M216 206 H248.2 A2.8 2.8 0 0 1 251 208.8 V770 A2.8 2.8 0 0 1 248.2 772.8 H216 A2.8 2.8 0 0 1 213.2 770 V208.8 A2.8 2.8 0 0 1 216 206 Z M221 214 V764.8 H243 V214 Z"/>
<path d="M109 145 L196 177.7" stroke="#fe0000" stroke-width="7.6" stroke-linecap="round" fill="none"/>
<path d="M198.2 166.2 L215.2 184.4 L189.4 187.4 Z" fill="#fe0000" stroke="#fe0000" stroke-width="1" stroke-linejoin="round"/>
<path d="M580 191.1 L418 190.3" stroke="#fe0000" stroke-width="7.4" stroke-linecap="round" fill="none"/>
<path d="M420 178 L397 189.5 L420 201.5 Z" fill="#fe0000" stroke="#fe0000" stroke-width="1" stroke-linejoin="round"/>
</svg>
</body>
</html>
